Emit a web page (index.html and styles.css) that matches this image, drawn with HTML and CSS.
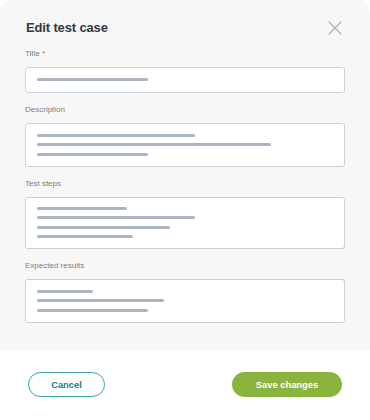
FILE: index.html
```html
<!DOCTYPE html>
<html lang="en">
<head>
<meta charset="utf-8">
<title>Edit test case</title>
<link rel="stylesheet" href="styles.css">
</head>
<body>
<div class="modal">
  <div class="body">
    <div class="header">
      <h1 class="title">Edit test case</h1>
      <svg class="close" width="14" height="14" viewBox="0 0 14 14" aria-label="Close">
        <path d="M1 1 L13 13 M13 1 L1 13" stroke="#a9b3be" stroke-width="1.3" fill="none" stroke-linecap="round"/>
      </svg>
    </div>
    <div class="fields">
      <div class="field">
        <div class="label">Title <span class="req">*</span></div>
        <div class="box box-1">
          <span class="bar" style="width:111px"></span>
        </div>
      </div>
      <div class="field">
        <div class="label">Description</div>
        <div class="box box-3">
          <span class="bar" style="width:158px"></span>
          <span class="bar" style="width:234px"></span>
          <span class="bar" style="width:111px"></span>
        </div>
      </div>
      <div class="field">
        <div class="label">Test steps</div>
        <div class="box box-4">
          <span class="bar" style="width:90px"></span>
          <span class="bar" style="width:158px"></span>
          <span class="bar" style="width:133px"></span>
          <span class="bar" style="width:96px"></span>
        </div>
      </div>
      <div class="field">
        <div class="label">Expected results</div>
        <div class="box box-3">
          <span class="bar" style="width:56px"></span>
          <span class="bar" style="width:127px"></span>
          <span class="bar" style="width:111px"></span>
        </div>
      </div>
    </div>
  </div>
  <div class="footer">
    <button class="btn btn-cancel">Cancel</button>
    <button class="btn btn-save">Save changes</button>
  </div>
</div>
</body>
</html>
```
FILE: styles.css
```css
* { box-sizing: border-box; }
html, body {
  margin: 0;
  padding: 0;
  background: #ffffff;
  font-family: "Liberation Sans", Arial, sans-serif;
}
.modal {
  width: 370px;
  height: 420px;
  display: flex;
  flex-direction: column;
}
.body {
  height: 350px;
  background: #f7f7f7;
  border-radius: 12px 12px 0 0;
  padding: 18px 25px 0 25px;
}
.header {
  height: 18px;
  display: flex;
  align-items: center;
  justify-content: space-between;
  margin-bottom: 13px;
}
.title {
  margin: 0 0 0 1px;
  font-size: 13px;
  font-weight: 700;
  color: #33393e;
  letter-spacing: -0.15px;
}
.close {
  margin-right: 3px;
  margin-top: 2px;
}
.fields {
  display: flex;
  flex-direction: column;
  gap: 12.5px;
}
.field {
  display: flex;
  flex-direction: column;
}
.label {
  height: 10px;
  line-height: 10px;
  font-size: 8px;
  color: #7b7f83;
  margin-bottom: 7.5px;
}
.req { color: #e2473b; }
.box {
  background: #ffffff;
  border: 1px solid #c8d0d8;
  border-radius: 3px;
  padding: 0 10.5px;
  display: flex;
  flex-direction: column;
  justify-content: center;
  gap: 6.5px;
}
.box-1 { height: 26px; }
.box-3 { height: 44px; }
.box-4 { height: 52px; }
.bar {
  display: block;
  height: 3px;
  border-radius: 2px;
  background: #a9b5c1;
}
.footer {
  display: flex;
  justify-content: space-between;
  padding: 22px 28px 0 28px;
}
.btn {
  height: 25px;
  border-radius: 13px;
  font-family: "Liberation Sans", Arial, sans-serif;
  font-size: 9.4px;
  font-weight: 700;
  padding: 0;
}
.btn-cancel {
  width: 77px;
  background: #ffffff;
  border: 1px solid #3f9fae;
  color: #217d8c;
}
.btn-save {
  width: 110px;
  background: #8bb43f;
  border: none;
  color: #ffffff;
}
```
